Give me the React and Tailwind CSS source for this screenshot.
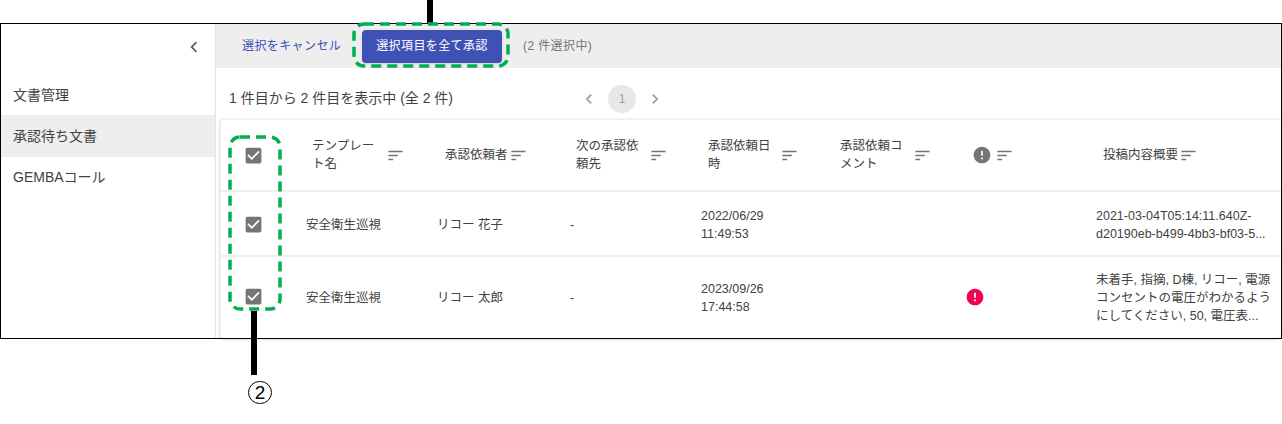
const FONT = "font-['Liberation_Sans','Noto_Sans_CJK_JP',sans-serif]";

const Sort = () => (
  <svg viewBox="0 0 24 24" className="w-[19px] h-[19px] shrink-0 fill-[#757575]">
    <path d="M3 18h6v-2H3v2zM3 6v2h18V6H3zm0 7h12v-2H3v2z" />
  </svg>
);

const Check = () => (
  <svg viewBox="0 0 24 24" className="w-[21px] h-[21px] fill-[#757575]">
    <path d="M19 3H5c-1.11 0-2 .9-2 2v14c0 1.1.89 2 2 2h14c1.11 0 2-.9 2-2V5c0-1.1-.89-2-2-2zm-9 14l-5-5 1.41-1.41L10 14.17l7.59-7.59L19 8l-9 9z" />
  </svg>
);

const ErrorIcon = ({ className }) => (
  <svg viewBox="0 0 24 24" className={className}>
    <path d="M12 2C6.48 2 2 6.48 2 12s4.48 10 10 10 10-4.48 10-10S17.52 2 12 2zm1 15h-2v-2h2v2zm0-4h-2V7h2v6z" />
  </svg>
);

const Chevron = ({ dir, className }) => (
  <svg viewBox="0 0 24 24" className={className}>
    <path d={dir === "left" ? "M15.41 7.41 14 6l-6 6 6 6 1.41-1.41L10.83 12z" : "M10 6 8.59 7.41 13.17 12l-4.58 4.59L10 18l6-6z"} />
  </svg>
);

const GRID = "grid grid-cols-[69px_131px_133px_131px_132px_134px_129px_1fr]";

const headers = [
  { label: <>テンプレー<br />ト名</>, cell: "pl-[22px]", text: "w-[64px]", sort: "ml-[10px]" },
  { label: "承認依頼者", cell: "pl-[24px]", text: "w-[63px]", sort: "ml-[1px]" },
  { label: <>次の承認依<br />頼先</>, cell: "pl-[22px]", text: "w-[63px]", sort: "ml-[10px]" },
  { label: <>承認依頼日<br />時</>, cell: "pl-[23px]", text: "w-[63px]", sort: "ml-[9px]" },
  { label: <>承認依頼コ<br />メント</>, cell: "pl-[23px]", text: "w-[63px]", sort: "ml-[10px]" },
  { icon: true, cell: "pl-[21px]", sort: "ml-[3px]" },
  { label: "投稿内容概要", cell: "pl-[23px]", text: "w-[75px]", sort: "ml-[1px]" },
];

const rows = [
  {
    h: "h-[65px] pt-[2px]",
    user: "リコー 花子",
    date: ["2022/06/29", "11:49:53"],
    err: false,
    summary: ["2021-03-04T05:14:11.640Z-", "d20190eb-b499-4bb3-bf03-5..."],
  },
  {
    h: "h-[81px]",
    user: "リコー 太郎",
    date: ["2023/09/26", "17:44:58"],
    err: true,
    summary: ["未着手, 指摘, D棟, リコー, 電源", "コンセントの電圧がわかるよう", "にしてください, 50, 電圧表..."],
  },
];

export default function App() {
  return (
    <div className={`relative h-[424px] w-[1282px] overflow-hidden bg-white ${FONT}`}>
      <div className="pt-[23px]">
        <div className="flex h-[316px] border border-black">
          <aside className="w-[215px] shrink-0 border-r border-[#e6e6e6] text-[14px] text-[#424242]">
            <div className="flex h-[45px] items-center justify-end pr-[10px]">
              <Chevron dir="left" className="w-[22px] h-[22px] fill-[#616161]" />
            </div>
            <nav className="pt-[4px]">
              <div className="flex h-[42px] items-center pl-[12px] pt-[2px]">文書管理</div>
              <div className="flex h-[42px] items-center bg-[#eeeeee] pl-[12px]">承認待ち文書</div>
              <div className="flex h-[42px] items-center pb-[2px] pl-[12px]">GEMBAコール</div>
            </nav>
          </aside>

          <main className="min-w-0 flex-1">
            <div className="flex h-[44px] items-center bg-[#eeeeee] text-[12px] tracking-[0.4px]">
              <span className="ml-[26px] w-[120px] text-[#3f51b5]">選択をキャンセル</span>
              <span className="flex h-[33px] w-[140px] items-center justify-center rounded bg-[#3f51b5] text-white shadow-sm">選択項目を全て承認</span>
              <span className="ml-[21px] text-[#757575]">(2 件選択中)</span>
            </div>

            <div className="flex h-[51px] items-center pt-[10px]">
              <span className="ml-[13px] w-[350px] text-[14px] text-[#424242]">1 件目から 2 件目を表示中 (全 2 件)</span>
              <Chevron dir="left" className="w-[20px] h-[20px] fill-[#9e9e9e]" />
              <span className="ml-[9px] flex h-[28px] w-[28px] items-center justify-center rounded-full bg-[#e8e8e8] text-[12px] text-[#9e9e9e]">1</span>
              <Chevron dir="right" className="ml-[9px] w-[20px] h-[20px] fill-[#9e9e9e]" />
            </div>

            <div className="ml-[4px] rounded-[4px] border-l border-t border-[#f0f0f0] text-[12.5px] text-[#424242] shadow-[0_1px_3px_rgba(0,0,0,0.25)]">
              <div className={`${GRID} h-[72px] items-center border-b-2 border-[#eeeeee] leading-[18px]`}>
                <div className="flex justify-center pr-[4px]"><Check /></div>
                {headers.map((c, i) => (
                  <div key={i} className={`flex items-center ${c.cell}`}>
                    {c.icon ? (
                      <ErrorIcon className="w-[20px] h-[20px] shrink-0 fill-[#757575]" />
                    ) : (
                      <span className={`shrink-0 ${c.text}`}>{c.label}</span>
                    )}
                    <span className={c.sort}><Sort /></span>
                  </div>
                ))}
              </div>

              {rows.map((r, i) => (
                <div key={i} className={`${GRID} ${r.h} items-center leading-[18px] ${i === 0 ? "border-b-2 border-[#eeeeee]" : ""}`}>
                  <div className={`flex justify-center pr-[4px] ${r.err ? "mb-[2px]" : ""}`}><Check /></div>
                  <div className="pl-[16px]">安全衛生巡視</div>
                  <div className="pl-[16px]">{r.user}</div>
                  <div className="pl-[16px]">-</div>
                  <div className="pl-[16px]">{r.date.map((d) => <div key={d}>{d}</div>)}</div>
                  <div />
                  <div className="mb-[2px] pl-[14px]">
                    {r.err && <ErrorIcon className="w-[20px] h-[20px] fill-[#f50057]" />}
                  </div>
                  <div className="whitespace-nowrap pl-[16px]">{r.summary.map((s) => <div key={s}>{s}</div>)}</div>
                </div>
              ))}
            </div>
          </main>
        </div>
      </div>

      {/* annotations laid over the screenshot */}
      <div className="absolute left-[427px] top-0 h-[24px] w-[6px] bg-black" />
      <svg className="absolute left-[351px] top-[21px]" width="160" height="48" fill="none">
        <rect x="3" y="3" width="154" height="42" rx="10" stroke="#00b050" strokeWidth="3.5" strokeDasharray="10 6" />
      </svg>
      <svg className="absolute left-[227px] top-[134px]" width="56" height="178" fill="none">
        <rect x="3" y="3" width="50" height="172" rx="10" stroke="#00b050" strokeWidth="3.5" strokeDasharray="10 6" />
      </svg>
      <div className="absolute left-[251px] top-[311px] h-[64px] w-[6px] bg-black" />
      <div className="absolute left-[248px] top-[381px] flex h-[23px] w-[24px] items-center justify-center rounded-full border border-black text-[19px] leading-none text-black">2</div>
    </div>
  );
}
